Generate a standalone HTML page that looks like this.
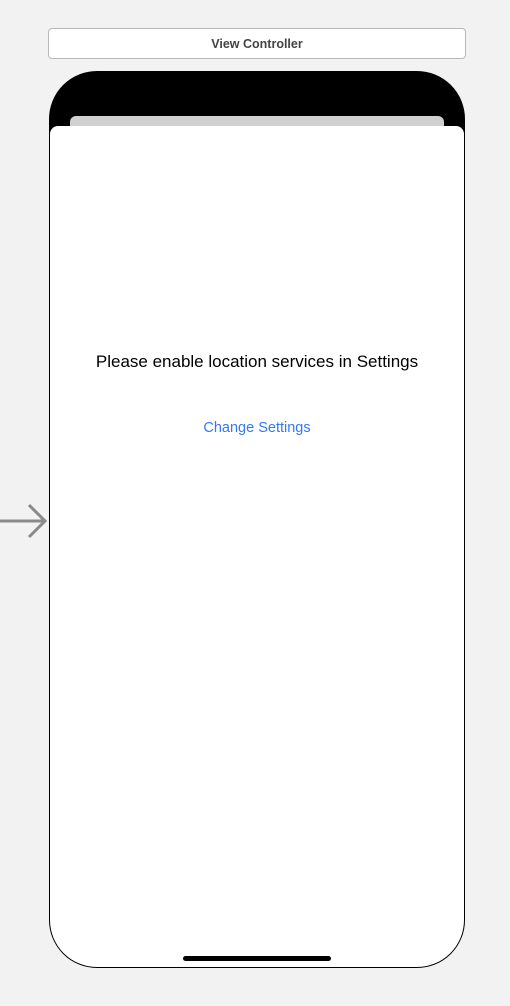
<!DOCTYPE html>
<html><head><style>
body{margin:0;width:510px;height:1006px;background:#f2f2f2;position:relative;overflow:hidden;font-family:"Liberation Sans",sans-serif}
.hdr{position:absolute;left:48px;top:28px;width:416px;height:29px;background:#fff;border:1px solid #b8b8b8;border-radius:4px;text-align:center;line-height:31px;font-size:12.5px;font-weight:bold;color:#444}
.phone{position:absolute;left:49px;top:71px;width:414px;height:895px;border:1px solid #000;border-radius:48px;background:#000;overflow:hidden}
.gray{position:absolute;left:20px;top:44px;width:374px;height:30px;background:#d0d0d0;border-radius:6px}
.white{position:absolute;left:0;top:54px;width:414px;height:841px;background:#fff;border-radius:8px 8px 0 0}
.t1{position:absolute;left:0;width:414px;top:226px;text-align:center;font-size:17px;color:#000}
.t2{position:absolute;left:0;width:414px;top:294px;text-align:center;font-size:14.5px;color:#3478f6}
.home{position:absolute;left:133px;top:884px;width:148px;height:5px;background:#000;border-radius:3px}
</style></head><body>
<div class="hdr">View Controller</div>
<div class="phone">
<div class="gray"></div>
<div class="white">
<div class="t1">Please enable location services in Settings</div>
<div class="t2">Change Settings</div>
</div>
<div class="home"></div>
</div>
<svg style="position:absolute;left:0;top:500px" width="48" height="42"><path d="M0 21H45M29 5L45 21L29 37" fill="none" stroke="#8a8a8a" stroke-width="3"/></svg>
</body></html>
